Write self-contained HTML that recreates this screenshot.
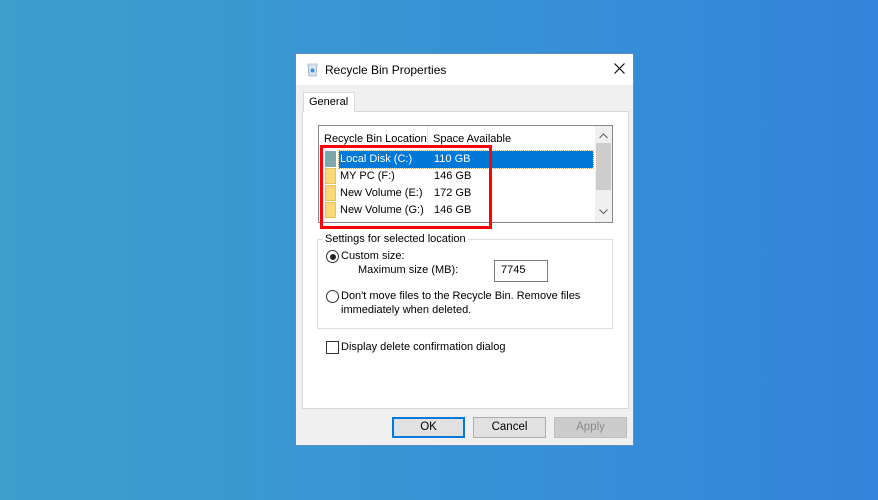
<!DOCTYPE html>
<html><head><style>
*{margin:0;padding:0;box-sizing:border-box}
body{width:878px;height:500px;overflow:hidden;background:linear-gradient(90deg,#3c9fcd 0%,#3890d6 60%,#3483dc 100%);font-family:"Liberation Sans",sans-serif;font-size:11px;color:#000;position:relative}
.a{position:absolute}
.dlg{left:295px;top:53px;width:339px;height:393px;background:#f0f0f0;border:1px solid #5a8fc8}
.t{white-space:nowrap}
.btn{height:21px;border:1px solid #adadad;background:#e1e1e1;text-align:center;line-height:19px;font-size:11.5px}
</style></head><body>
<div class="a dlg">
 <div class="a" style="left:0;top:0;width:337px;height:31px;background:#fff"></div>
 <svg class="a" style="left:10px;top:8px" width="13" height="15" viewBox="0 0 13 15"><path d="M2 3h9l-1 11H3z" fill="#d8e4ee" stroke="#9ab" stroke-width=".8"/><rect x="1" y="1.5" width="11" height="2" fill="#c6d4e0"/><circle cx="6.5" cy="8.5" r="2" fill="#3a8fd8"/></svg>
 <div class="a t" style="left:29px;top:9px;font-size:12px">Recycle Bin Properties</div>
 <svg class="a" style="left:318px;top:9px" width="11" height="11"><path d="M0.5 0.5L10.5 10.5M10.5 0.5L0.5 10.5" stroke="#000" stroke-width="1.1"/></svg>
 <div class="a" style="left:6px;top:57px;width:327px;height:298px;background:#fff;border:1px solid #d9d9d9"></div>
 <div class="a" style="left:7px;top:38px;width:52px;height:20px;background:#fff;border:1px solid #d9d9d9;border-bottom:none"></div>
 <div class="a t" style="left:13px;top:42px">General</div>
 <div class="a" style="left:22px;top:71px;width:295px;height:98px;border:1px solid #828790;background:#fff"></div>
 <div class="a" style="left:299px;top:72px;width:17px;height:96px;background:#f0f0f0"></div>
 <div class="a" style="left:300px;top:89px;width:15px;height:47px;background:#cdcdcd"></div>
 <svg class="a" style="left:303px;top:79px" width="9" height="6"><path d="M0.5 5L4.5 1L8.5 5" stroke="#606060" fill="none"/></svg>
 <svg class="a" style="left:303px;top:155px" width="9" height="6"><path d="M0.5 0.5L4.5 4.5L8.5 0.5" stroke="#606060" fill="none"/></svg>
 <div class="a" style="left:131px;top:72px;width:1px;height:20px;background:#e5e5e5"></div>
 <div class="a t" style="left:28px;top:79px">Recycle Bin Location</div>
 <div class="a t" style="left:137px;top:79px">Space Available</div>
 <div class="a" style="left:43px;top:97px;width:254px;height:17px;background:#0078d7;outline:1px dotted #f0a040"></div>
 <div class="a" style="left:29px;top:97px;width:11px;height:16px;background:#7ea6ac"></div>
 <div class="a" style="left:29px;top:114px;width:11px;height:16px;background:#fbd977;border:1px solid #e7c35c"></div>
 <div class="a" style="left:29px;top:131px;width:11px;height:16px;background:#fbd977;border:1px solid #e7c35c"></div>
 <div class="a" style="left:29px;top:148px;width:11px;height:16px;background:#fbd977;border:1px solid #e7c35c"></div>
 <div class="a t" style="left:44px;top:99px;color:#fff">Local Disk (C:)</div><div class="a t" style="left:138px;top:99px;color:#fff">110 GB</div>
 <div class="a t" style="left:44px;top:116px">MY PC (F:)</div><div class="a t" style="left:138px;top:116px">146 GB</div>
 <div class="a t" style="left:44px;top:133px">New Volume (E:)</div><div class="a t" style="left:138px;top:133px">172 GB</div>
 <div class="a t" style="left:44px;top:150px">New Volume (G:)</div><div class="a t" style="left:138px;top:150px">146 GB</div>
 <div class="a" style="left:24px;top:91px;width:172px;height:84px;border:3px solid #f00"></div>
 <div class="a" style="left:21px;top:185px;width:296px;height:90px;border:1px solid #dcdcdc"></div>
 <div class="a t" style="left:27px;top:179px;background:#fff;padding:0 2px">Settings for selected location</div>
 <div class="a" style="left:30px;top:196px;width:13px;height:13px;border:1px solid #333;border-radius:50%;background:#fff"></div>
 <div class="a" style="left:33.5px;top:199.5px;width:6px;height:6px;border-radius:50%;background:#222"></div>
 <div class="a t" style="left:45px;top:196px">Custom size:</div>
 <div class="a t" style="left:62px;top:210px">Maximum size (MB):</div>
 <div class="a" style="left:198px;top:206px;width:54px;height:22px;border:1px solid #7a7a7a;background:#fff"></div>
 <div class="a t" style="left:205px;top:210px">7745</div>
 <div class="a" style="left:30px;top:236px;width:13px;height:13px;border:1px solid #333;border-radius:50%;background:#fff"></div>
 <div class="a t" style="left:45px;top:236px">Don't move files to the Recycle Bin. Remove files</div>
 <div class="a t" style="left:45px;top:250px">immediately when deleted.</div>
 <div class="a" style="left:30px;top:287px;width:13px;height:13px;border:1px solid #333;background:#fff"></div>
 <div class="a t" style="left:45px;top:287px">Display delete confirmation dialog</div>
 <div class="a btn" style="left:96px;top:363px;width:73px;border:2px solid #0078d7;line-height:17px">OK</div>
 <div class="a btn" style="left:177px;top:363px;width:73px">Cancel</div>
 <div class="a btn" style="left:258px;top:363px;width:73px;background:#cccccc;border-color:#bfbfbf;color:#8a8a8a">Apply</div>
</div>
</body></html>
